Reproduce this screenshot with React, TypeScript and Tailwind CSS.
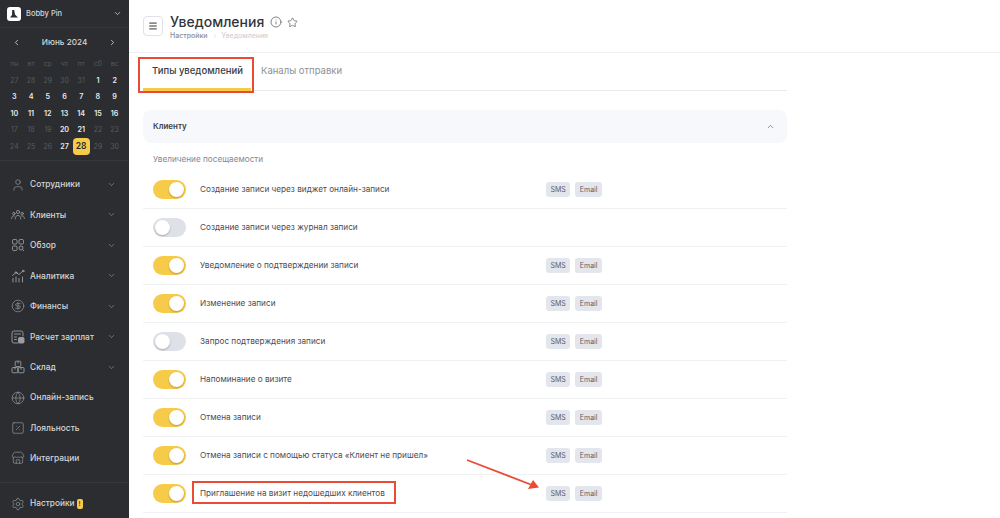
import { ChevronDown, ChevronLeft, ChevronRight, ChevronUp, CircleDollarSign, Globe, Info, Menu, Settings, SquarePercent, Star, Store, User } from 'lucide-react';
import type { ReactNode } from 'react';

const weekdays = ['пн', 'вт', 'ср', 'чт', 'пт', 'сб', 'вс'];

const days = [
  { d: 27, dim: true }, { d: 28, dim: true }, { d: 29, dim: true }, { d: 30, dim: true }, { d: 31, dim: true }, { d: 1 }, { d: 2 },
  { d: 3 }, { d: 4 }, { d: 5 }, { d: 6 }, { d: 7 }, { d: 8 }, { d: 9 },
  { d: 10 }, { d: 11 }, { d: 12 }, { d: 13 }, { d: 14 }, { d: 15 }, { d: 16 },
  { d: 17, dim: true }, { d: 18, dim: true }, { d: 19, dim: true }, { d: 20 }, { d: 21 }, { d: 22, dim: true }, { d: 23, dim: true },
  { d: 24, dim: true }, { d: 25, dim: true }, { d: 26, dim: true }, { d: 27 }, { d: 28, today: true }, { d: 29, dim: true }, { d: 30, dim: true },
];

const iconClass = 'w-[14px] h-[14px] text-[#9b9fa4]';

const ClientsIcon = () => (
  <svg viewBox="0 0 14 14" fill="none" stroke="currentColor" strokeWidth="0.8" strokeLinecap="round" className={iconClass}>
    <circle cx="7" cy="4" r="1.6" />
    <circle cx="2.8" cy="5.6" r="1.2" />
    <circle cx="11.2" cy="5.6" r="1.2" />
    <path d="M4.2 11c0-2 1.2-3.6 2.8-3.6S9.8 9 9.8 11" />
    <path d="M.6 10.6c0-1.6.9-2.8 2.2-2.8.4 0 .7.1 1 .3M13.4 10.6c0-1.6-.9-2.8-2.2-2.8-.4 0-.7.1-1 .3" />
  </svg>
);

const OverviewIcon = () => (
  <svg viewBox="0 0 14 14" fill="none" stroke="currentColor" strokeWidth="0.9" className={iconClass}>
    <rect x="1.5" y="1.5" width="4.5" height="4.5" rx="1.2" />
    <rect x="8" y="1.5" width="4.5" height="4.5" rx="1.2" />
    <rect x="1.5" y="8" width="4.5" height="4.5" rx="1.2" />
    <circle cx="10" cy="10" r="2" />
    <path d="M11.5 11.5 13 13" />
  </svg>
);

const ChartIcon = () => (
  <svg viewBox="0 0 14 14" fill="none" stroke="currentColor" strokeWidth="0.9" strokeLinecap="round" className={iconClass}>
    <path d="M2 13V9.5M5 13V8M8 13V9.5M11.5 13V8" />
    <path d="M1.5 6.5 5 3.5 8 5.5 12 2" />
    <circle cx="12.2" cy="2" r="0.8" />
    <circle cx="5" cy="3.5" r="0.8" />
  </svg>
);

const PayrollIcon = () => (
  <svg viewBox="0 0 14 14" fill="none" stroke="currentColor" strokeWidth="0.9" strokeLinecap="round" className={iconClass}>
    <path d="M7 13H3a2 2 0 0 1-2-2V3a2 2 0 0 1 2-2h7a2 2 0 0 1 2 2v3" />
    <path d="M3.5 4h6M3.5 7h2M3.5 9.5h2" />
    <rect x="7.5" y="7.5" width="5.5" height="5.5" rx="1" fill="currentColor" />
  </svg>
);

const StockIcon = () => (
  <svg viewBox="0 0 14 14" fill="none" stroke="currentColor" strokeWidth="0.9" className={iconClass}>
    <rect x="4.2" y="1.2" width="5.6" height="5.3" rx="1" />
    <rect x="1" y="7.5" width="5.8" height="5.3" rx="1" />
    <rect x="7.2" y="7.5" width="5.8" height="5.3" rx="1" />
    <path d="M7 1.5v2M4 7.7v2M10 7.7v2" />
  </svg>
);

const menu: { label: string; icon: ReactNode; more?: boolean }[] = [
  { label: 'Сотрудники', icon: <User className={iconClass} strokeWidth={1.1} />, more: true },
  { label: 'Клиенты', icon: <ClientsIcon />, more: true },
  { label: 'Обзор', icon: <OverviewIcon />, more: true },
  { label: 'Аналитика', icon: <ChartIcon />, more: true },
  { label: 'Финансы', icon: <CircleDollarSign className={iconClass} strokeWidth={1.1} />, more: true },
  { label: 'Расчет зарплат', icon: <PayrollIcon />, more: true },
  { label: 'Склад', icon: <StockIcon />, more: true },
  { label: 'Онлайн-запись', icon: <Globe className={iconClass} strokeWidth={1.1} /> },
  { label: 'Лояльность', icon: <SquarePercent className={iconClass} strokeWidth={1.1} /> },
  { label: 'Интеграции', icon: <Store className={iconClass} strokeWidth={1.1} /> },
];

const rows = [
  { label: 'Создание записи через виджет онлайн-записи', on: true, badges: true },
  { label: 'Создание записи через журнал записи', on: false, badges: false },
  { label: 'Уведомление о подтверждении записи', on: true, badges: true },
  { label: 'Изменение записи', on: true, badges: true },
  { label: 'Запрос подтверждения записи', on: false, badges: true },
  { label: 'Напоминание о визите', on: true, badges: true },
  { label: 'Отмена записи', on: true, badges: true },
  { label: 'Отмена записи с помощью статуса «Клиент не пришел»', on: true, badges: true },
  { label: 'Приглашение на визит недошедших клиентов', on: true, badges: true },
];

function Toggle({ on }: { on: boolean }) {
  return (
    <div className={`w-[33px] h-[19px] rounded-full p-[2px] flex shrink-0 ${on ? 'bg-[#f7cb4a] justify-end' : 'bg-[#dfe1e8] justify-start'}`}>
      <div className="w-[15px] h-[15px] rounded-full bg-white shadow-[0_1px_2px_rgba(0,0,0,0.25)]" />
    </div>
  );
}

function Badge({ children }: { children: ReactNode }) {
  return <span className="h-[15px] px-[4.5px] rounded-[3px] bg-[#e4e6ed] text-[#5b5e66] text-[7px] leading-[15px]">{children}</span>;
}

export default function App() {
  return (
    <div className="relative flex h-[518px] w-[1000px] overflow-hidden bg-white font-['Inter',sans-serif]">
      {/* Sidebar */}
      <aside className="w-[129px] shrink-0 bg-[#2b2d30] flex flex-col">
        <div className="h-[28px] flex items-center pl-[7px] pr-[7px] border-b border-[#35373a]">
          <div className="w-[14px] h-[14px] rounded-[3px] bg-white flex items-center justify-center">
            <svg viewBox="0 0 10 10" className="w-[10px] h-[10px]"><path d="M3.2 1h2l.8 4.5L9 8.5H1L3 6z" fill="#2b2d30" /></svg>
          </div>
          <span className="ml-[5px] text-[7.5px] font-medium text-[#d5d6d8] leading-none">Bobby Pin</span>
          <ChevronDown className="ml-auto w-[9px] h-[9px] text-[#d5d6d8]" strokeWidth={2} />
        </div>

        {/* Calendar */}
        <div className="h-[133px] border-b border-[#35373a] px-[6px] pt-[8px]">
          <div className="flex items-center justify-between h-[12px] px-[6px]">
            <ChevronLeft className="w-[9px] h-[9px] text-[#e0e1e3]" strokeWidth={2} />
            <span className="text-[8.2px] font-medium text-[#d5d6d8] leading-none">Июнь 2024</span>
            <ChevronRight className="w-[9px] h-[9px] text-[#e0e1e3]" strokeWidth={2} />
          </div>
          <div className="grid grid-cols-7 mt-[7px] h-[17px] items-center text-center">
            {weekdays.map(w => (
              <span key={w} className="text-[7px] text-[#55585c] leading-none">{w}</span>
            ))}
          </div>
          <div className="grid grid-cols-7 auto-rows-[16.5px] items-center justify-items-center">
            {days.map((c, i) => (
              <span
                key={i}
                className={`leading-none ${c.today ? 'w-[17px] h-[17px] rounded-[4px] bg-[#f7cb4a] text-[#2b2d30] text-[8.5px] font-semibold flex items-center justify-center' : c.dim ? 'text-[7px] text-[#585b5f]' : 'text-[7.2px] font-semibold text-[#e8e9ea]'}`}
              >
                {c.d}
              </span>
            ))}
          </div>
        </div>

        {/* Menu */}
        <nav className="flex-1 pt-[8.3px]">
          {menu.map(m => (
            <div key={m.label} className="h-[30.45px] flex items-center pl-[11px] pr-[13px]">
              <span className="w-[14px] flex justify-center">{m.icon}</span>
              <span className="ml-[5px] text-[8.4px] font-medium text-[#d5d6d8] leading-none">{m.label}</span>
              {m.more && <ChevronDown className="ml-auto w-[9px] h-[9px] text-[#9b9fa4]" strokeWidth={1.6} />}
            </div>
          ))}
        </nav>

        <div className="h-[36px] pt-[6px] border-t border-[#35373a] flex items-center pl-[11px]">
          <Settings className={iconClass} strokeWidth={1.1} />
          <span className="ml-[5px] text-[8.3px] font-medium text-[#d5d6d8] leading-none">Настройки</span>
          <span className="ml-[2px] w-[6px] h-[10px] rounded-[2px] bg-[#f7cb4a] text-[#2b2d30] text-[6px] font-semibold leading-[10px] text-center">!</span>
        </div>
      </aside>

      {/* Main */}
      <main className="flex-1 min-w-0 flex flex-col">
        <header className="h-[53px] shrink-0 border-b border-[#eeeff2] flex items-center pl-[14px]">
          <button className="w-[20px] h-[20px] rounded-[4px] border border-[#dfe0ea] flex items-center justify-center">
            <Menu className="w-[10px] h-[10px] text-[#33353a]" strokeWidth={2.4} />
          </button>
          <div className="ml-[7px] pt-[1px]">
            <div className="flex items-center">
              <h1 className="text-[14px] font-medium text-[#33353a] leading-[18px]">Уведомления</h1>
              <Info className="ml-[6px] w-[12px] h-[12px] text-[#55585e]" strokeWidth={1.5} />
              <Star className="ml-[5px] w-[11px] h-[11px] text-[#55585e]" strokeWidth={1.5} />
            </div>
            <div className="flex items-center text-[7px] leading-[9px]">
              <span className="text-[#8a8d94] font-medium">Настройки</span>
              <ChevronRight className="mx-[4px] w-[6px] h-[6px] text-[#c8cad0]" />
              <span className="text-[#c8cad0]">Уведомления</span>
            </div>
          </div>
        </header>

        <div className="pl-[14px] w-[658px] flex-1 flex flex-col">
          <div className="h-[38px] shrink-0 flex border-b border-[#e8e9ec] text-[9.5px] font-medium">
            <div className="w-[108px] h-[38px] border-b-[3px] border-[#f7cb4a] flex items-center justify-center pt-[1px] pl-[1px] text-[#3a3c42]">Типы уведомлений</div>
            <div className="ml-[10px] h-[37px] flex items-center text-[#8d9096] font-normal">Каналы отправки</div>
          </div>

          <div className="mt-[19px] h-[33px] shrink-0 rounded-[8px] bg-[#f7f8fb] flex items-center pl-[10px] pr-[12px] pb-[1px]">
            <span className="text-[8px] font-semibold text-[#3a3c42]">Клиенту</span>
            <ChevronUp className="ml-auto w-[9px] h-[9px] text-[#6b6e74]" strokeWidth={2} />
          </div>

          <div className="mt-[10px] h-[12px] pl-[10px] text-[8.2px] leading-[12px] text-[#85888f]">Увеличение посещаемости</div>

          <div className="mt-[6px]">
            {rows.map(r => (
              <div key={r.label} className="h-[38px] border-b border-[#f0f1f3] flex items-center pl-[10px]">
                <Toggle on={r.on} />
                <span className="ml-[14px] w-[346px] text-[8.2px] text-[#4a4c52] whitespace-nowrap">{r.label}</span>
                {r.badges && (
                  <div className="flex gap-[5px]">
                    <Badge>SMS</Badge>
                    <Badge>Email</Badge>
                  </div>
                )}
              </div>
            ))}
          </div>
        </div>
      </main>

      {/* Annotations drawn on top of the screenshot */}
      <div className="absolute left-[138px] top-[57px] w-[116px] h-[36px] border-2 border-[#ea4b35]" />
      <div className="absolute left-[192px] top-[481px] w-[204px] h-[23px] border-2 border-[#ea4b35]" />
      <svg className="absolute left-[460px] top-[450px]" width="90" height="50" viewBox="0 0 90 50">
        <path d="M7 10 L72 35" stroke="#ea4b35" strokeWidth="1.8" fill="none" />
        <path d="M79 37.5 L68 39 L73 30 Z" fill="#ea4b35" />
      </svg>
    </div>
  );
}
